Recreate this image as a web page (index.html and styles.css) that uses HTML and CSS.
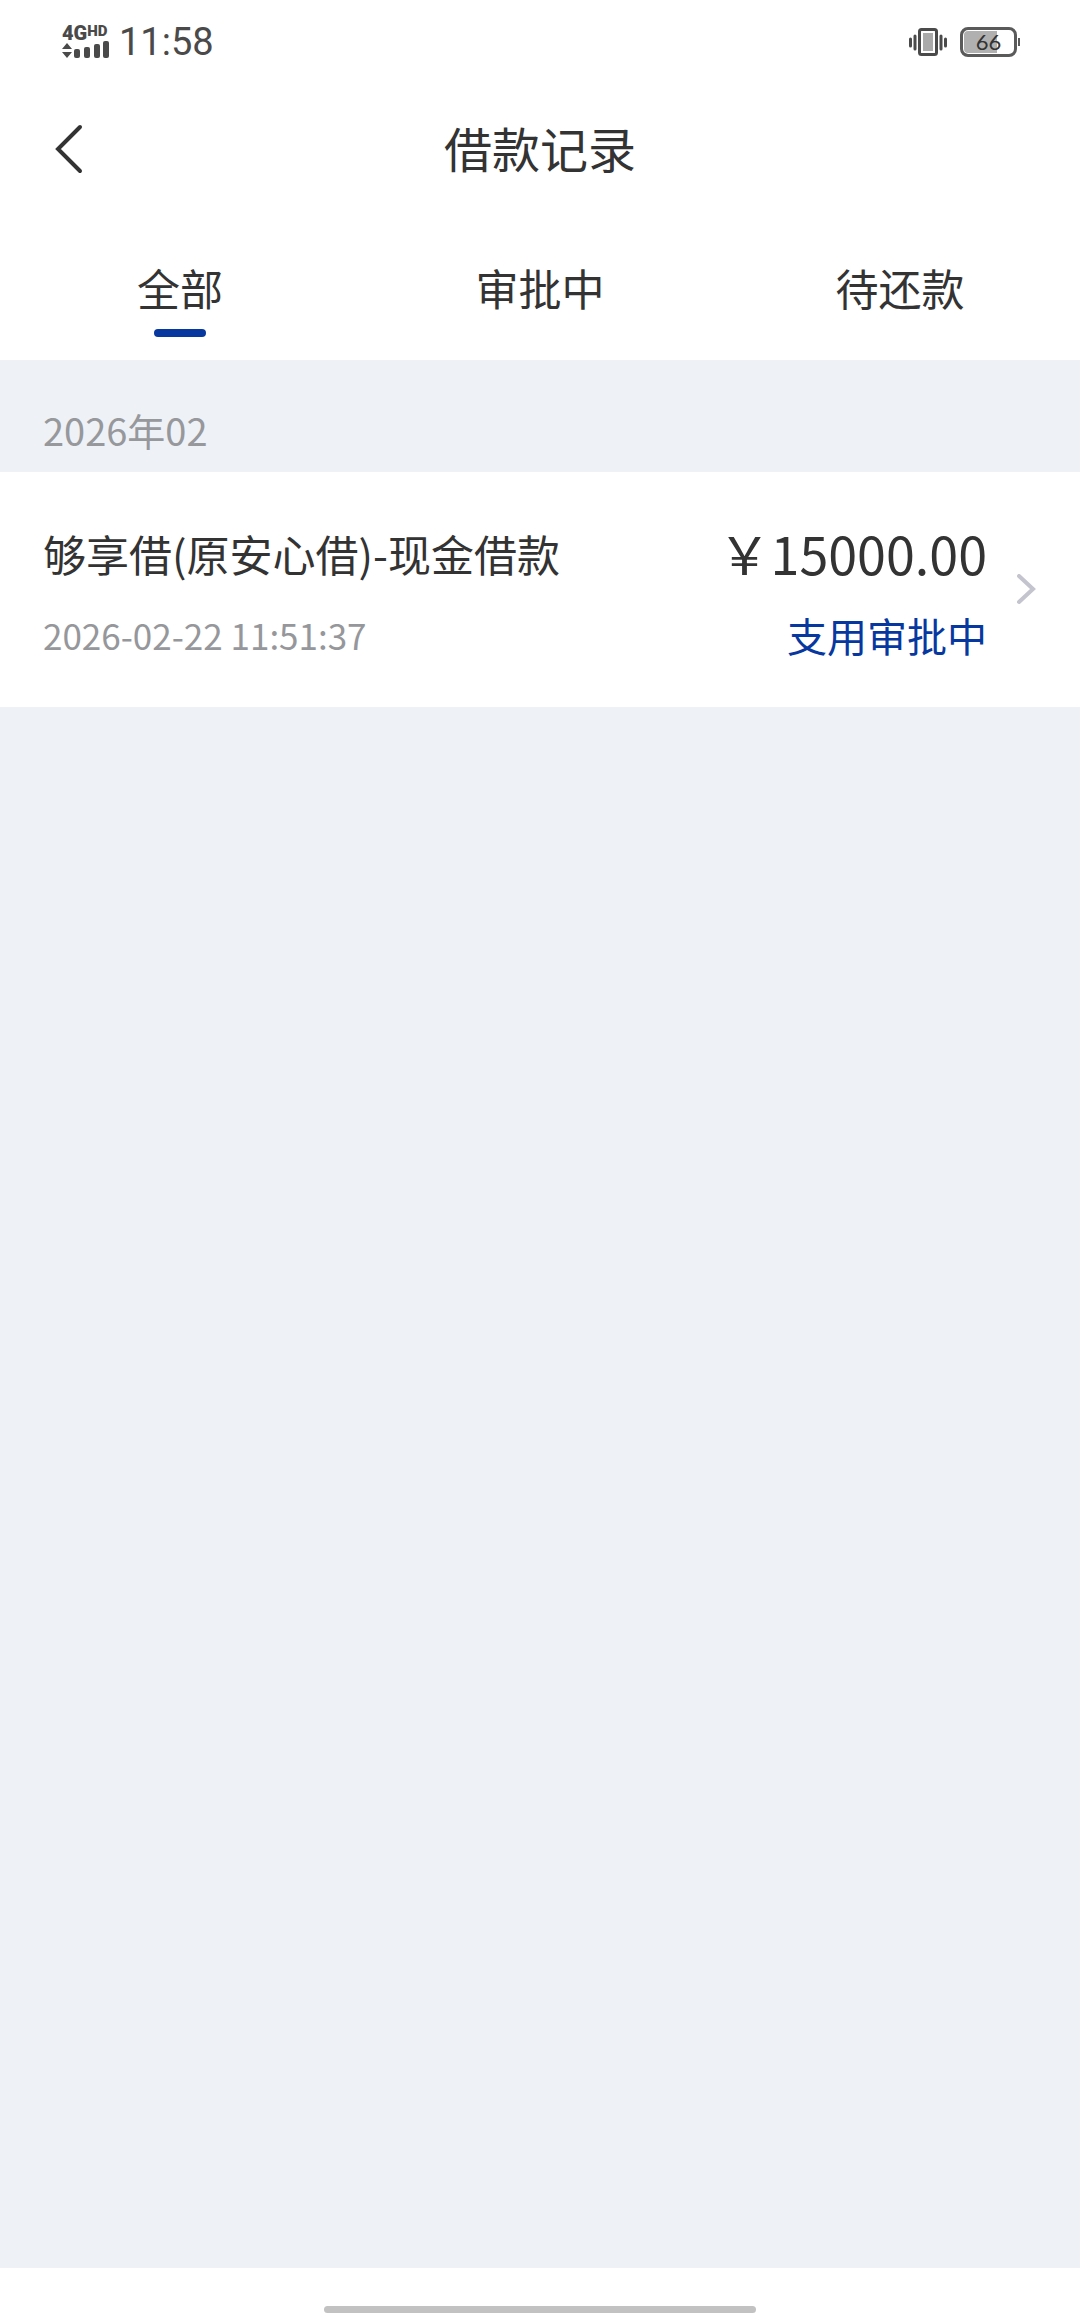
FILE: index.html
```html
<!DOCTYPE html>
<html lang="zh-CN">
	<head>
		<meta charset="UTF-8">
		<meta name="viewport" content="width=device-width">
		<title>借款记录</title>
		<link rel="stylesheet" href="styles.css">
	</head>
	<body>
		<div class="status">
			<div class="signal">
				<div class="net">4G<span>HD</span></div>
				<svg width="48" height="18" viewBox="0 0 48 18">
					<path d="M0 8L5 2L10 8ZM0 11L10 11L5 17Z"/>
					<rect x="12" y="8" width="6" height="9" rx="2"/>
					<rect x="22" y="6" width="6" height="11" rx="2"/>
					<rect x="32" y="3" width="6" height="14" rx="2"/>
					<rect x="41" y="0" width="6" height="17" rx="2"/>
				</svg>
			</div>
			<div class="time">11:58</div>
			<svg class="vibrate" width="38" height="28" viewBox="0 0 38 28">
				<rect x="10.5" y="1.5" width="17" height="25" rx="2" fill="#fff" stroke="#4a4a4a" stroke-width="3"/>
				<rect x="14" y="5" width="10" height="18" fill="#aaa"/>
				<path d="M1.5 11V18M6 8V21M32 8V21M36.5 11V18" stroke="#4a4a4a" stroke-width="3" stroke-linecap="round"/>
			</svg>
			<div class="battery"><span>66</span></div>
		</div>
		<div class="header">
			<button class="back" aria-label="返回">
				<svg width="28" height="50" viewBox="0 0 28 50">
					<path d="M25 3L3 25L25 47"/>
				</svg>
			</button>
			<h1>借款记录</h1>
		</div>
		<div class="tabs">
			<button class="tab active">全部</button>
			<button class="tab">审批中</button>
			<button class="tab">待还款</button>
		</div>
		<div class="content">
			<h2 class="month">2026年02</h2>
			<a class="record" href="#">
				<div class="info">
					<div class="name">够享借(原安心借)-现金借款</div>
					<div class="date">2026-02-22 11:51:37</div>
				</div>
				<div class="money">
					<div class="amount">&#65509;15000.00</div>
					<div class="state">支用审批中</div>
				</div>
				<svg class="arrow" width="20" height="32" viewBox="0 0 20 32">
					<path d="M2 2L16 15L2 28"/>
				</svg>
			</a>
		</div>
		<div class="bottom">
			<div class="bar"></div>
		</div>
	</body>
</html>
```

FILE: styles.css
```css
*{
	margin: 0;
	padding: 0;
	box-sizing: border-box;
}
body{
	display: flex;
	flex-direction: column;
	min-height: 100vh;
	background: #fff;
	color: #333;
	font-family: "Noto Sans CJK SC", sans-serif;
}
button{
	border: 0;
	background: none;
	color: inherit;
	font-family: inherit;
}
svg{
	display: block;
}
/* 状态栏 */
.status{
	display: flex;
	align-items: center;
	height: 84px;
	padding: 0 63px 0 62px;
	color: #4a4a4a;
}
.signal{
	width: 48px;
	margin-right: 9px;
	fill: #4a4a4a;
}
.net{
	display: flex;
	height: 16px;
	font: 900 20px/16px Roboto, sans-serif;
}
.net span{
	font-size: 15px;
	line-height: 12px;
}
.time{
	font: 38px/44px Roboto, sans-serif;
}
.vibrate{
	margin-left: auto;
}
.battery{
	position: relative;
	width: 57px;
	height: 30px;
	margin-left: 13px;
	border: 3px solid #5a5a5a;
	border-radius: 8px;
	background: linear-gradient(to right, #b0b0b0 66%, #fff 66%);
	box-shadow: inset 0 0 0 1px #fff;
	color: #333;
	font: 22px/24px Lato, sans-serif;
	text-align: center;
}
.battery::after{
	content: "";
	position: absolute;
	top: 8px;
	right: -6px;
	width: 2px;
	height: 8px;
	background: #5a5a5a;
}
/* 标题 */
.header{
	display: grid;
	grid-template-columns: 1fr auto 1fr;
	align-items: center;
	height: 130px;
	padding: 0 55px;
}
.back{
	width: 28px;
}
.back path{
	fill: none;
	stroke: #333;
	stroke-width: 4;
	stroke-linecap: round;
}
h1{
	padding-bottom: 4px;
	font-size: 48px;
	font-weight: normal;
	line-height: 72px;
}
.tabs{
	display: flex;
	height: 146px;
}
.tab{
	position: relative;
	flex: 1;
	font-size: 43px;
	line-height: 64px;
}
.active::after{
	content: "";
	position: absolute;
	left: 50%;
	bottom: 23px;
	width: 52px;
	height: 8px;
	margin-left: -26px;
	border-radius: 4px;
	background: #0738a0;
}
/* 列表 */
.content{
	flex: 1;
	background: #eef1f6;
}
.month{
	padding: 42px 43px 14px;
	color: #96989c;
	font-size: 38px;
	font-weight: normal;
	line-height: 56px;
}
.record{
	display: flex;
	align-items: center;
	padding: 42px 43px;
	background: #fff;
	color: #333;
	text-decoration: none;
}
.info{
	flex: 1;
}
.name,
.amount{
	height: 80px;
	line-height: 78px;
}
.date,
.state{
	height: 71px;
	line-height: 82px;
}
.name{
	font-size: 43px;
}
.date{
	color: #96979b;
	font-size: 35px;
}
.money{
	text-align: right;
}
.amount{
	font-size: 52px;
}
.state{
	color: #0738a0;
	font-size: 40px;
}
.arrow{
	margin-left: 30px;
}
.arrow path{
	fill: none;
	stroke: #c4c4ce;
	stroke-width: 4;
	stroke-linecap: round;
}
.bottom{
	display: flex;
	justify-content: center;
	height: 48px;
	padding-top: 38px;
}
.bar{
	width: 40%;
	height: 7px;
	border-radius: 4px;
	background: #c2c2c2;
}
```
